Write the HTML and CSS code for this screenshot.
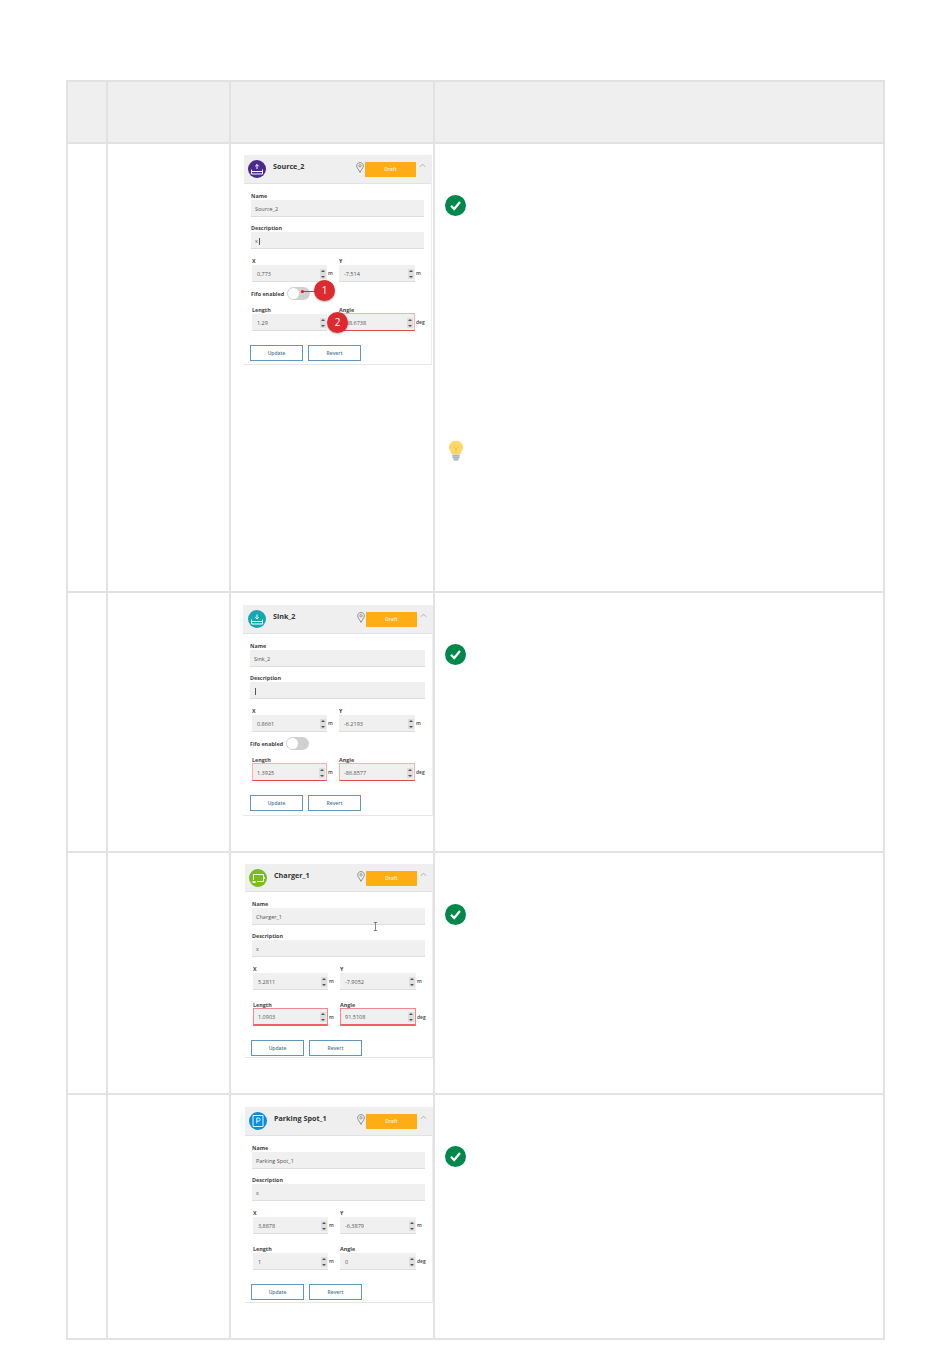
FILE: index.html
```html
<!DOCTYPE html>
<html lang="en">
<head>
    <meta charset="UTF-8">
    <title>Station properties</title>
    <link rel="stylesheet" href="styles.css">
</head>
<body>
    <table class="steps">
        <colgroup>
            <col class="col-no">
            <col class="col-step">
            <col class="col-shot">
            <col class="col-note">
        </colgroup>
        <thead>
            <tr class="row-head"><th></th><th></th><th></th><th></th></tr>
        </thead>
        <tbody>
            <tr class="row-source">
                <td></td>
                <td></td>
                <td>
                    <div class="panel panel-source">
                        <div class="panel-head">
                            <svg class="type-icon" viewBox="0 0 18 18"><circle cx="9" cy="9" r="9" fill="#4a2a8a"/><path d="M3.5 9.500v4.500h11V9.500M3.500 11.500h11M9 9V4.500M7.200 6.300 9 4.500l1.800 1.800" fill="none" stroke="#fff" stroke-width="1"/></svg>
                            <span class="panel-title">Source_2</span>
                            <svg class="pin" viewBox="0 0 8 11"><path d="M4 .6C2 .6.7 2 .7 3.800c0 2.200 2.200 4 3.300 6.600C5.100 7.800 7.300 6 7.300 3.800 7.300 2 6 .6 4 .6Z" fill="none" stroke="#777" stroke-width=".8"/><circle cx="4" cy="3.800" r="1.200" fill="none" stroke="#777" stroke-width=".7"/></svg>
                            <span class="draft">Draft</span>
                            <svg class="chevron" viewBox="0 0 8 5"><path d="M1 4 4 1l3 3" fill="none" stroke="#999" stroke-width=".8"/></svg>
                        </div>
                        <div class="panel-body">
                            <div class="label">Name</div>
                            <div class="input">Source_2</div>
                            <div class="label gap-name">Description</div>
                            <div class="input">x<span class="caret"></span></div>
                            <div class="coords gap-desc">
                                <div class="label">X</div><div></div><div class="label">Y</div><div></div>
                                <div class="num">0,773<span class="spin"></span></div><div class="unit">m</div>
                                <div class="num">-7,514<span class="spin"></span></div><div class="unit">m</div>
                            </div>
                            <div class="fifo"><span class="label">Fifo enabled</span><span class="toggle"></span></div>
                            <div class="coords gap-fifo">
                                <div class="label">Length</div><div></div><div class="label">Angle</div><div></div>
                                <div class="num">1.29<span class="spin"></span></div><div class="unit">m</div>
                                <div class="num num-error">-88.6738<span class="spin"></span></div><div class="unit">deg</div>
                            </div>
                            <div class="buttons"><span class="btn">Update</span><span class="btn">Revert</span></div>
                        </div>
                        <span class="callout-dot"></span>
                        <span class="callout callout-1">1</span>
                        <span class="callout callout-2">2</span>
                    </div>
                </td>
                <td>
                    <svg class="check" viewBox="0 0 22 22"><circle cx="11" cy="11" r="11" fill="#00884a"/><path d="m6.300 11.300 3.300 3.400 6.100-7.300" fill="none" stroke="#fff" stroke-width="2.400"/></svg>
                    <svg class="bulb" viewBox="0 0 18 24"><path d="M9 .8C4.300.8 1 4.200 1 8.300c0 3.600 2.600 5.300 3.300 8.200h9.400C14.400 13.600 17 11.900 17 8.300 17 4.200 13.700.8 9 .8Z" fill="#fdd76a"/><path d="M6 7l3 3.500L12 7M9 10.500v6" fill="none" stroke="#f8bd3a" stroke-width=".9"/><path d="M4.800 16.800h8.400v2H4.800zM5 19.200h8v2H5zM6.300 21.500h5.400V23.500H6.300z" fill="#a3b5c2"/></svg>
                </td>
            </tr>
            <tr class="row-sink">
                <td></td>
                <td></td>
                <td>
                    <div class="panel panel-sink">
                        <div class="panel-head">
                            <svg class="type-icon" viewBox="0 0 18 18"><circle cx="9" cy="9" r="9" fill="#18a6b5"/><path d="M3.500 9.500v4.500h11V9.500M3.500 11.500h11M9 4.500V9M7.200 7.200 9 9l1.800-1.800" fill="none" stroke="#fff" stroke-width="1"/></svg>
                            <span class="panel-title">Sink_2</span>
                            <svg class="pin" viewBox="0 0 8 11"><path d="M4 .6C2 .6.7 2 .7 3.800c0 2.200 2.200 4 3.300 6.600C5.100 7.800 7.300 6 7.300 3.800 7.300 2 6 .6 4 .6Z" fill="none" stroke="#777" stroke-width=".8"/><circle cx="4" cy="3.800" r="1.200" fill="none" stroke="#777" stroke-width=".7"/></svg>
                            <span class="draft">Draft</span>
                            <svg class="chevron" viewBox="0 0 8 5"><path d="M1 4 4 1l3 3" fill="none" stroke="#999" stroke-width=".8"/></svg>
                        </div>
                        <div class="panel-body">
                            <div class="label">Name</div>
                            <div class="input">Sink_2</div>
                            <div class="label gap-name">Description</div>
                            <div class="input"><span class="caret"></span></div>
                            <div class="coords gap-desc">
                                <div class="label">X</div><div></div><div class="label">Y</div><div></div>
                                <div class="num">0.8661<span class="spin"></span></div><div class="unit">m</div>
                                <div class="num">-6.2193<span class="spin"></span></div><div class="unit">m</div>
                            </div>
                            <div class="fifo"><span class="label">Fifo enabled</span><span class="toggle"></span></div>
                            <div class="coords gap-fifo">
                                <div class="label">Length</div><div></div><div class="label">Angle</div><div></div>
                                <div class="num num-error">1.3925<span class="spin"></span></div><div class="unit">m</div>
                                <div class="num num-error">-86.8577<span class="spin"></span></div><div class="unit">deg</div>
                            </div>
                            <div class="buttons"><span class="btn">Update</span><span class="btn">Revert</span></div>
                        </div>
                    </div>
                </td>
                <td>
                    <svg class="check" viewBox="0 0 22 22"><circle cx="11" cy="11" r="11" fill="#00884a"/><path d="m6.300 11.300 3.300 3.400 6.100-7.300" fill="none" stroke="#fff" stroke-width="2.400"/></svg>
                </td>
            </tr>
            <tr class="row-charger">
                <td></td>
                <td></td>
                <td>
                    <div class="panel panel-charger">
                        <div class="panel-head">
                            <svg class="type-icon" viewBox="0 0 18 18"><circle cx="9" cy="9" r="9" fill="#78be20"/><path d="M4.500 11V5.500h10v7H8" fill="none" stroke="#fff" stroke-width="1"/><path d="M3.500 12h3v2h-3zM14.500 8h1.200v2h-1.200z" fill="#fff"/></svg>
                            <span class="panel-title">Charger_1</span>
                            <svg class="pin" viewBox="0 0 8 11"><path d="M4 .6C2 .6.7 2 .7 3.800c0 2.200 2.200 4 3.300 6.600C5.100 7.800 7.300 6 7.300 3.800 7.300 2 6 .6 4 .6Z" fill="none" stroke="#777" stroke-width=".8"/><circle cx="4" cy="3.800" r="1.200" fill="none" stroke="#777" stroke-width=".7"/></svg>
                            <span class="draft">Draft</span>
                            <svg class="chevron" viewBox="0 0 8 5"><path d="M1 4 4 1l3 3" fill="none" stroke="#999" stroke-width=".8"/></svg>
                        </div>
                        <div class="panel-body">
                            <div class="label">Name</div>
                            <div class="input">Charger_1</div>
                            <div class="label gap-name">Description</div>
                            <div class="input">x</div>
                            <div class="coords gap-desc">
                                <div class="label">X</div><div></div><div class="label">Y</div><div></div>
                                <div class="num">5.2811<span class="spin"></span></div><div class="unit">m</div>
                                <div class="num">-7.9052<span class="spin"></span></div><div class="unit">m</div>
                            </div>
                            <div class="coords gap-plain">
                                <div class="label">Length</div><div></div><div class="label">Angle</div><div></div>
                                <div class="num num-error strong">1.0903<span class="spin"></span></div><div class="unit">m</div>
                                <div class="num num-error strong">91.5108<span class="spin"></span></div><div class="unit">deg</div>
                            </div>
                            <div class="buttons"><span class="btn">Update</span><span class="btn">Revert</span></div>
                        </div>
                        <svg class="ibeam" viewBox="0 0 5 9"><path d="M.8.5h3.400M2.500.5v8M.8 8.500h3.400" fill="none" stroke="#555" stroke-width=".7"/></svg>
                    </div>
                </td>
                <td>
                    <svg class="check" viewBox="0 0 22 22"><circle cx="11" cy="11" r="11" fill="#00884a"/><path d="m6.300 11.300 3.300 3.400 6.100-7.300" fill="none" stroke="#fff" stroke-width="2.400"/></svg>
                </td>
            </tr>
            <tr class="row-parking">
                <td></td>
                <td></td>
                <td>
                    <div class="panel panel-parking">
                        <div class="panel-head">
                            <svg class="type-icon" viewBox="0 0 18 18"><circle cx="9" cy="9" r="9" fill="#0a8fd6"/><path d="M4 3.500h10v11H4z" fill="none" stroke="#fff" stroke-width=".9"/><path d="M7.800 11.500v-5.500h1.800a1.500 1.500 0 0 1 0 3.200H7.800" fill="none" stroke="#fff" stroke-width=".9"/></svg>
                            <span class="panel-title">Parking Spot_1</span>
                            <svg class="pin" viewBox="0 0 8 11"><path d="M4 .6C2 .6.7 2 .7 3.800c0 2.200 2.200 4 3.300 6.600C5.100 7.800 7.300 6 7.300 3.800 7.300 2 6 .6 4 .6Z" fill="none" stroke="#777" stroke-width=".8"/><circle cx="4" cy="3.800" r="1.200" fill="none" stroke="#777" stroke-width=".7"/></svg>
                            <span class="draft">Draft</span>
                            <svg class="chevron" viewBox="0 0 8 5"><path d="M1 4 4 1l3 3" fill="none" stroke="#999" stroke-width=".8"/></svg>
                        </div>
                        <div class="panel-body">
                            <div class="label">Name</div>
                            <div class="input">Parking Spot_1</div>
                            <div class="label gap-name">Description</div>
                            <div class="input">x</div>
                            <div class="coords gap-desc">
                                <div class="label">X</div><div></div><div class="label">Y</div><div></div>
                                <div class="num">3,8878<span class="spin"></span></div><div class="unit">m</div>
                                <div class="num">-6,3879<span class="spin"></span></div><div class="unit">m</div>
                            </div>
                            <div class="coords gap-plain">
                                <div class="label">Length</div><div></div><div class="label">Angle</div><div></div>
                                <div class="num">1<span class="spin"></span></div><div class="unit">m</div>
                                <div class="num">0<span class="spin"></span></div><div class="unit">deg</div>
                            </div>
                            <div class="buttons"><span class="btn">Update</span><span class="btn">Revert</span></div>
                        </div>
                    </div>
                </td>
                <td>
                    <svg class="check" viewBox="0 0 22 22"><circle cx="11" cy="11" r="11" fill="#00884a"/><path d="m6.300 11.300 3.300 3.400 6.100-7.300" fill="none" stroke="#fff" stroke-width="2.400"/></svg>
                </td>
            </tr>
        </tbody>
    </table>
</body>
</html>
```
FILE: styles.css
```css
body {
    margin: 0;
    padding: 80px 0 0 66px;
    font-family: "Open Sans", "Liberation Sans", sans-serif;
    color: #333;
    background: #fff;
}

.steps {
    width: 819px;
    table-layout: fixed;
    border-collapse: collapse;
    border: 2px solid #e2e2e2;
}
.steps th,
.steps td {
    border: 2px solid #e2e2e2;
    padding: 0;
    vertical-align: top;
}
.steps th {
    background: #efefef;
}
.col-no { width: 40px; }
.col-step { width: 123px; }
.col-shot { width: 204px; }
.col-note { width: 450px; }

.row-head { height: 62px; }
.row-source { height: 449px; }
.row-sink { height: 260px; }
.row-charger { height: 242px; }
.row-parking { height: 245px; }

/* screenshot of the properties panel */
.panel {
    position: relative;
    box-sizing: border-box;
    border-right: 1px solid #eee;
    border-bottom: 1px solid #e6e6e6;
}
.panel-source { width: 188px; margin: 11px 0 0 13px; }
.panel-sink { width: 190px; margin: 12px 0 0 12px; }
.panel-charger { width: 188px; margin: 11px 0 0 14px; }
.panel-parking { width: 188px; margin: 12px 0 0 14px; }

.panel-head {
    display: flex;
    align-items: flex-start;
    box-sizing: border-box;
    height: 29px;
    padding: 5px 11px 0 4px;
    background: #efefef;
    border-bottom: 1px solid #e2e2e2;
}
.panel-sink .panel-head { padding-left: 5px; }
.panel-charger .panel-head { height: 28px; }
.type-icon {
    width: 18px;
    height: 18px;
    flex: none;
}
.panel-title {
    margin: 1px 0 0 7px;
    font-size: 7.2px;
    line-height: 10px;
    font-weight: 700;
    color: #333;
}
.pin {
    width: 8px;
    height: 11px;
    margin: 2px 1px 0 auto;
}
.draft {
    width: 51px;
    height: 15px;
    margin-top: 2px;
    background: #ffad14;
    color: #fff3d6;
    font-size: 5px;
    font-weight: 600;
    line-height: 15px;
    text-align: center;
}
.chevron {
    width: 7px;
    height: 5px;
    margin: 3px -6px 0 3px;
}

.panel-body {
    padding: 8px 7px 3px;
}
.panel-sink .panel-body { padding-bottom: 4px; }
.panel-charger .panel-body { padding-bottom: 1px; }
.panel-parking .panel-body { padding-bottom: 2px; }
.label {
    height: 8px;
    font-size: 5.4px;
    line-height: 8px;
    font-weight: 700;
    color: #444;
}
.input {
    box-sizing: border-box;
    height: 17px;
    padding-left: 4px;
    background: #f0f0f0;
    border-bottom: 1px solid #ddd;
    font-size: 5.5px;
    line-height: 18px;
    color: #555;
}
.caret {
    display: inline-block;
    width: 1px;
    height: 7px;
    margin-left: 1px;
    background: #555;
    vertical-align: middle;
}
.gap-name { margin-top: 7px; }
.gap-desc { margin-top: 8px; }
.gap-fifo { margin-top: 6px; }
.gap-plain { margin-top: 11px; }

.coords {
    display: grid;
    grid-template-columns: 75px 12px 76px 20px;
    padding-left: 1px;
}
.panel-sink .coords { padding-left: 2px; }
.num {
    display: flex;
    align-items: center;
    justify-content: space-between;
    box-sizing: border-box;
    height: 17px;
    padding: 1px 1px 0 5px;
    background: #f0f0f0;
    border-bottom: 1px solid #ddd;
    font-size: 5.5px;
    color: #555;
}
.num-error {
    height: 18px;
    margin-top: -1px;
    border: 1px solid #f6b0b0;
    border-bottom: 1px solid #e0474f;
    padding-left: 4px;
}
.num-error.strong {
    border-color: #f08a8a;
    border-bottom: 2px solid #ec6068;
}
.unit {
    padding-left: 1px;
    font-size: 5px;
    line-height: 17px;
    font-weight: 600;
    color: #444;
}
.spin {
    position: relative;
    width: 6px;
    height: 10px;
    background: #dedede;
}
.spin::before,
.spin::after {
    content: "";
    position: absolute;
    left: 1px;
    border-left: 2px solid transparent;
    border-right: 2px solid transparent;
}
.spin::before {
    top: 1px;
    border-bottom: 2px solid #555;
}
.spin::after {
    bottom: 1px;
    border-top: 2px solid #555;
}

.fifo {
    display: flex;
    align-items: center;
    gap: 3px;
    height: 13px;
    margin-top: 5px;
}
.toggle {
    position: relative;
    width: 23px;
    height: 13px;
    border-radius: 7px;
    background: #d0d0d0;
}
.toggle::before {
    content: "";
    position: absolute;
    top: 1px;
    left: 1px;
    width: 11px;
    height: 11px;
    border-radius: 50%;
    background: #fff;
}

.buttons {
    display: flex;
    gap: 5px;
    margin: 14px 0 0 -1px;
}
.panel-sink .buttons {
    margin-left: 0;
}
.btn {
    box-sizing: border-box;
    width: 53px;
    height: 16px;
    border: 1px solid #5f97bd;
    color: #4a7797;
    font-size: 5px;
    font-weight: 600;
    line-height: 14px;
    text-align: center;
}

/* numbered marks laid over the panel */
.callout {
    position: absolute;
    width: 21px;
    height: 21px;
    border-radius: 50%;
    background: #dc2a2f;
    box-shadow: 0 1px 2px rgba(0, 0, 0, 0.3);
    color: #fff;
    font-size: 10px;
    line-height: 21px;
    text-align: center;
}
.callout-1 { left: 70px; top: 125px; }
.callout-2 { left: 83px; top: 157px; }
.callout-dot {
    position: absolute;
    left: 57px;
    top: 136px;
    width: 15px;
    height: 1px;
    background: #dc2a2f;
}
.callout-dot::before {
    content: "";
    position: absolute;
    left: 0;
    top: -1px;
    width: 3px;
    height: 3px;
    border-radius: 50%;
    background: #e8141c;
}
.ibeam {
    position: absolute;
    left: 128px;
    top: 58px;
    width: 5px;
    height: 9px;
}

/* notes column */
.check {
    display: block;
    width: 21px;
    height: 21px;
    margin: 51px 0 0 10px;
}
.bulb {
    display: block;
    width: 16px;
    height: 21px;
    margin: 224px 0 0 13px;
}
```
